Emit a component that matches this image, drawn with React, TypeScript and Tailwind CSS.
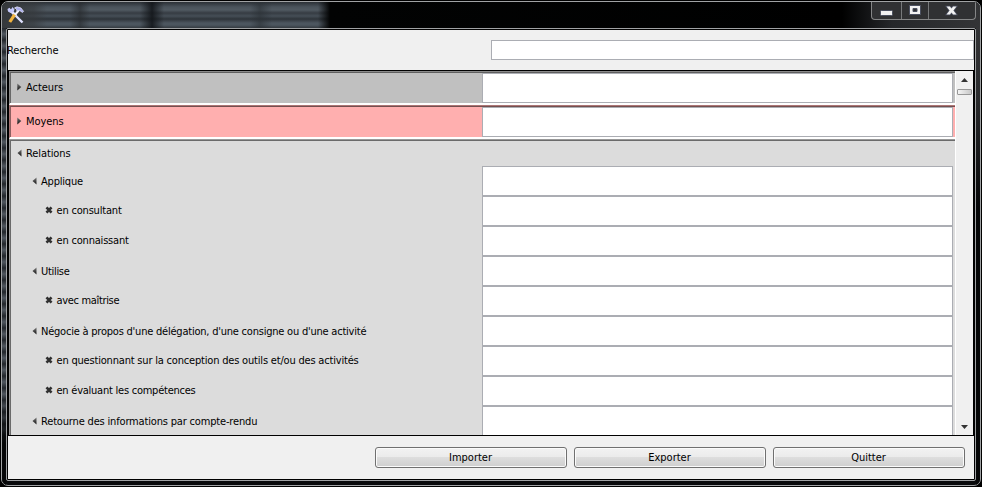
import React from "react";

const shell = "[font-family:'DejaVu_Sans_Condensed','DejaVu_Sans',sans-serif]";

function Arrow({ open }: { open?: boolean }) {
  return (
    <svg width="5" height="8" viewBox="0 0 5 8" className="-mt-0.5 shrink-0">
      <defs>
        <linearGradient id="arrow" x1="0" x2="0" y1="0" y2="1">
          <stop offset="0" stopColor="#777" />
          <stop offset="1" stopColor="#111" />
        </linearGradient>
      </defs>
      <path d={open ? "M4.5 0.5V7.5L0.5 4Z" : "M0.3 0.5V7.5L4.3 4Z"} fill="url(#arrow)" />
    </svg>
  );
}

function Cross() {
  return (
    <svg width="8" height="8" viewBox="0 0 8 8" className="-mt-0.5 shrink-0">
      <path d="M1.5 1.4L6.5 6.6M6.5 1.4L1.5 6.6" stroke="#303030" strokeWidth="2.7" />
    </svg>
  );
}

function Tools() {
  return (
    <svg width="18" height="18" viewBox="0 0 18 18">
      <path d="M8 9L15.5 16.5" stroke="#dfe1ff" strokeWidth="2.4" />
      <path d="M3 4L9 10" stroke="#e4e4ff" strokeWidth="2.8" />
      <path d="M0.5 3L2.5 1.8L4 3.4L5.5 1L7.5 3.4L6.5 6L3.5 7L1 5.5Z" fill="#c4c8fa" />
      <path d="M12 4L7 10" stroke="#f4f4ff" strokeWidth="2" />
      <path d="M7.6 8.6L2.8 16" stroke="#f2b440" strokeWidth="3.2" />
      <path d="M7.5 2L10 0.8L14 2L16.6 5.4L15.4 6.4L12.5 4.4L10 5.2L9.5 3Z" fill="#a9acee" stroke="#eeeeff" strokeWidth=".7" />
    </svg>
  );
}

const rows = [
  { t: "Applique", track: "tracking-[-0.2px]", leaf: false },
  { t: "en consultant", track: "tracking-[-0.19px]", leaf: true },
  { t: "en connaissant", track: "tracking-[-0.19px]", leaf: true },
  { t: "Utilise", track: "tracking-[-0.3px]", leaf: false },
  { t: "avec maîtrise", track: "tracking-[-0.33px]", leaf: true },
  { t: "Négocie à propos d'une délégation, d'une consigne ou d'une activité", track: "tracking-[-0.22px]", leaf: false },
  { t: "en questionnant sur la conception des outils et/ou des activités", track: "tracking-[-0.19px]", leaf: true },
  { t: "en évaluant les compétences", track: "tracking-[-0.24px]", leaf: true },
  { t: "Retourne des informations par compte-rendu", track: "tracking-[-0.17px]", leaf: false },
];

function Field() {
  return <input className="block h-[30px] w-[471px] shrink-0 border border-[#abadb3] bg-white outline-none" />;
}

function Push({ children }: { children: string }) {
  return (
    <button className="h-[21px] w-[192px] rounded-[3px] border border-[#707070] bg-[linear-gradient(#f2f2f2_0%,#ebebeb_48%,#dddddd_50%,#cfcfcf_100%)] pt-px pr-px text-[11px] leading-[18px] shadow-[inset_0_0_0_1px_#fbfbfb]">
      {children}
    </button>
  );
}

/* Groups shown as a single coloured bar with a two-tone sunken edge. */
function Group({ label, tone }: { label: string; tone: string }) {
  return (
    <section className={`flex h-[34px] w-[946px] border-b-2 border-l border-b-white pt-0.5 ${tone}`}>
      <div className="flex w-[472px] items-center gap-1 border-l border-black/45 pl-[6px]">
        <Arrow />
        <span className="tracking-[-0.05px]">{label}</span>
      </div>
      <Field />
    </section>
  );
}

export default function App() {
  return (
    <div className={`h-[487px] w-[982px] overflow-hidden bg-black p-px text-[11px] leading-[14px] text-black ${shell}`}>
      <div className="flex h-[485px] w-[980px] flex-col overflow-hidden rounded-[7px] border border-[#a0a2a4] bg-[#08090b]">
        <header className="flex h-[26px] shrink-0 justify-between bg-[linear-gradient(90deg,transparent_35px,transparent_316px,#020303_328px,#000_840px,#25272a_890px,#333436_978px),linear-gradient(90deg,#35383b_0,#35383b99_32px,transparent_45px,transparent_68px,#25282b99_78px,transparent_88px,transparent_138px,#111418dd_150px,transparent_162px,transparent_248px,#2a303599_258px,transparent_270px),linear-gradient(#2b3036_0,#4a535b_5px,#505961_8px,#363c43_11px,#454e56_14px,#2e343a_17px,#4c565f_21px,#4c565f_23px,#343a40_26px)]">
          <div className="pt-1 pl-[5px]"><Tools /></div>
          <div className="mr-1 flex h-[18px] w-[105px] rounded-b-[4px] border border-t-0 border-[#858687] bg-[#303133]">
            <div className="flex w-[30px] items-center justify-center border-r border-[#77797b]">
              <svg width="13" height="7" className="mt-1.5"><rect x=".5" y=".5" width="12" height="5" rx="1" fill="#f2f2f2" stroke="#4b5060" /></svg>
            </div>
            <div className="flex w-[27px] items-center justify-center border-r border-[#77797b] pb-px">
              <svg width="12" height="10"><path d="M.5.5h11v9H.5zM4 3.5v3h4v-3z" fill="#f2f2f2" stroke="#4b5060" fillRule="evenodd" /></svg>
            </div>
            <div className="flex grow items-center justify-center pr-0.5 pb-px">
              <svg width="13" height="11">
                <path d="M1.5 1.5h3.4l1.6 2L8.1 1.5h3.4L8.4 5.5L11.5 9.5H8.1L6.5 7.5L4.9 9.5H1.5L4.6 5.5Z" fill="#f2f2f2" stroke="#4b5060" strokeWidth="1.6" paintOrder="stroke" />
              </svg>
            </div>
          </div>
        </header>
        <div className="flex grow">
          <div className="w-1 shrink-0 bg-[linear-gradient(transparent_370px,#050607_415px),repeating-linear-gradient(#22262b_0,#50575f_6px,#22262b_12px)]" />
          <div className="h-[453px] w-[970px] shrink-0 rounded-[2px] border border-[#a0a2a4] bg-black p-px">
            <main className="flex h-[449px] w-[966px] flex-col bg-[#f0f0f0]">
              <div className="flex h-10 shrink-0 items-center justify-between">
                <label className="-ml-px pt-0.5 tracking-[-0.05px]">Recherche</label>
                <input className="h-5 w-[483px] border border-[#abadb3] bg-white outline-none" />
              </div>
              <div className="flex h-[366px] shrink-0 border border-black">
                <div className="w-[947px] shrink-0 overflow-hidden bg-white">
                  <Group label="Acteurs" tone="border-l-[#888] bg-[linear-gradient(#8a8a8a_1px,#606060_1px,#606060_2px,#c0c0c0_2px)]" />
                  <Group label="Moyens" tone="border-l-[#a07070] bg-[linear-gradient(#ad7777_1px,#754f4f_1px,#754f4f_2px,#ffafaf_2px)]" />
                  <section className="h-[300px] w-[946px] border-l border-l-[#999] bg-[linear-gradient(#999_1px,#6b6b6b_1px,#6b6b6b_2px,#dcdcdc_2px)] pt-0.5">
                    <div className="border-l border-[#6b6b6b]">
                      <div className="flex h-[25px] items-center gap-1 pl-[6px]">
                        <Arrow open />
                        <span className="tracking-[-0.1px]">Relations</span>
                      </div>
                      {rows.map((r) => (
                        <div key={r.t} className="flex h-[30px]">
                          <div className={`flex w-[471px] items-center ${r.leaf ? "gap-[3.5px] pl-[34px]" : "gap-1 pt-px pl-[21px]"}`}>
                            {r.leaf ? <Cross /> : <Arrow open />}
                            <span className={`whitespace-nowrap ${r.track}`}>{r.t}</span>
                          </div>
                          <Field />
                        </div>
                      ))}
                    </div>
                  </section>
                </div>
                <div className="flex grow flex-col items-center bg-[#f0f0f0]">
                  <svg width="7" height="4" className="mt-[7px]"><path d="M0 4L3.5 0L7 4Z" fill="#333" /></svg>
                  <div className="mt-[7px] h-[6px] w-[15px] rounded-[1px] border border-[#979797] bg-[linear-gradient(90deg,#f4f4f4,#c8c8c8)]" />
                  <svg width="7" height="4" className="mt-auto mb-[6px]"><path d="M0 0L3.5 4L7 0Z" fill="#333" /></svg>
                </div>
              </div>
              <footer className="flex grow items-start justify-end gap-[7px] pt-[11px] pr-[9px]">
                <Push>Importer</Push>
                <Push>Exporter</Push>
                <Push>Quitter</Push>
              </footer>
            </main>
          </div>
          <div className="grow bg-[linear-gradient(#333436,#2a2b2d_70px,#050607_180px)]" />
        </div>
      </div>
    </div>
  );
}
